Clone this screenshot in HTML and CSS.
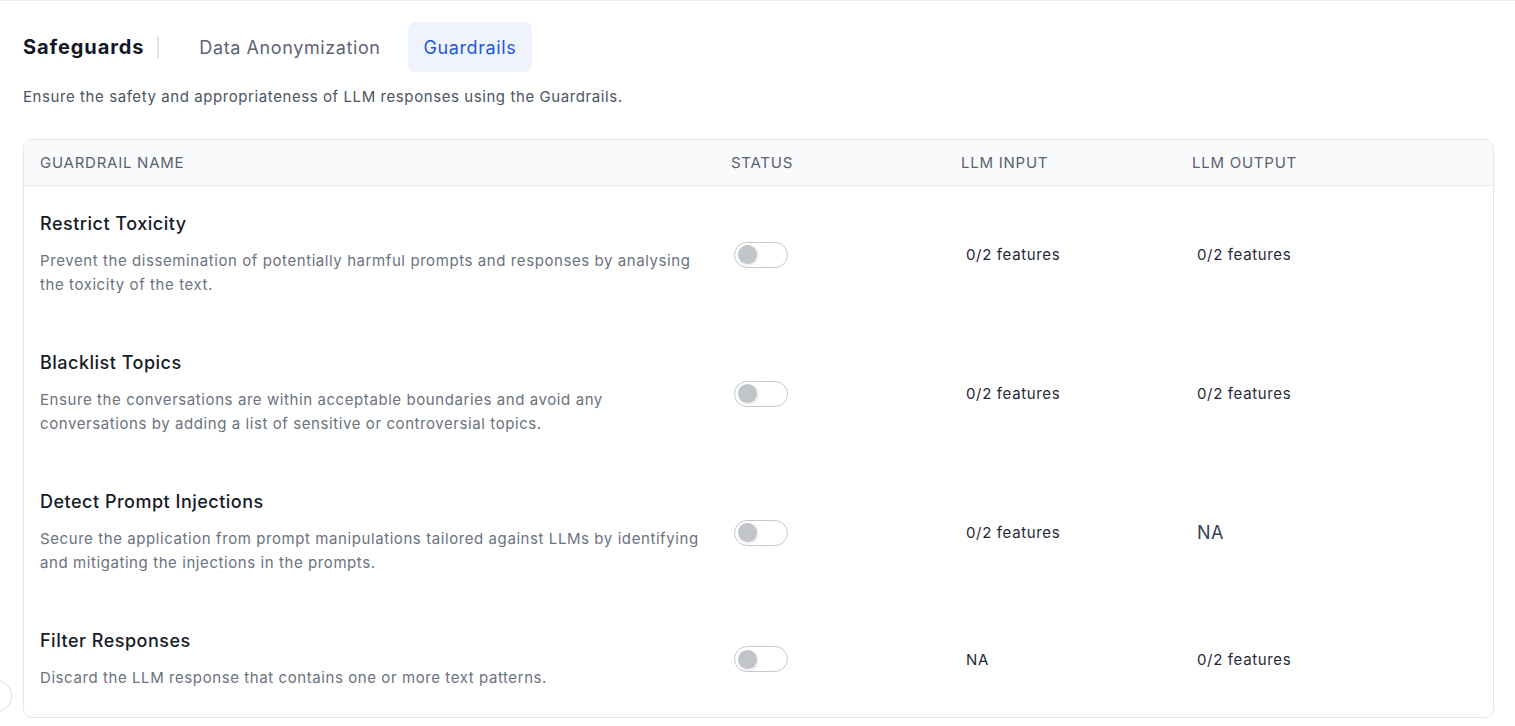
FILE: index.html
```html
<!DOCTYPE html>
<html>
<head>
<meta charset="utf-8">
<link rel="stylesheet" href="styles.css">
</head>
<body>
<div class="page">
  <div class="tabs">
    <span class="page-title">Safeguards</span>
    <span class="divider"></span>
    <span class="tab first-tab">Data Anonymization</span>
    <span class="tab active">Guardrails</span>
  </div>
  <p class="intro">Ensure the safety and appropriateness of LLM responses using the Guardrails.</p>

  <div class="table">
    <div class="row head">
      <div class="cell">GUARDRAIL NAME</div>
      <div class="cell">STATUS</div>
      <div class="cell">LLM INPUT</div>
      <div class="cell">LLM OUTPUT</div>
    </div>

    <div class="row body">
      <div class="cell name">
        <div class="title">Restrict Toxicity</div>
        <div class="desc">Prevent the dissemination of potentially harmful prompts and responses by analysing the toxicity of the text.</div>
      </div>
      <div class="cell mid"><span class="toggle"><span class="knob"></span></span></div>
      <div class="cell mid val">0/2 features</div>
      <div class="cell mid val">0/2 features</div>
    </div>

    <div class="row body">
      <div class="cell name">
        <div class="title">Blacklist Topics</div>
        <div class="desc">Ensure the conversations are within acceptable boundaries and avoid any conversations by adding a list of sensitive or controversial topics.</div>
      </div>
      <div class="cell mid"><span class="toggle"><span class="knob"></span></span></div>
      <div class="cell mid val">0/2 features</div>
      <div class="cell mid val">0/2 features</div>
    </div>

    <div class="row body">
      <div class="cell name">
        <div class="title">Detect Prompt Injections</div>
        <div class="desc">Secure the application from prompt manipulations tailored against LLMs by identifying and mitigating the injections in the prompts.</div>
      </div>
      <div class="cell mid"><span class="toggle"><span class="knob"></span></span></div>
      <div class="cell mid val">0/2 features</div>
      <div class="cell mid val big">NA</div>
    </div>

    <div class="row body last">
      <div class="cell name">
        <div class="title">Filter Responses</div>
        <div class="desc">Discard the LLM response that contains one or more text patterns.</div>
      </div>
      <div class="cell mid"><span class="toggle"><span class="knob"></span></span></div>
      <div class="cell mid val">NA</div>
      <div class="cell mid val">0/2 features</div>
    </div>
  </div>
</div>
<span class="side-handle"></span>
</body>
</html>
```

FILE: styles.css
```css
html, body {
  margin: 0;
  padding: 0;
  background: #ffffff;
  font-family: Inter, "Noto Sans", sans-serif;
  color: #111827;
}
body {
  border-top: 1px solid #ececef;
  height: 725px;
  overflow: hidden;
  position: relative;
}
.page {
  padding: 21px 21px 0 23px;
}
.tabs {
  display: flex;
  align-items: center;
  height: 50px;
}
.page-title {
  font-size: 20px;
  font-weight: 700;
  color: #111827;
  letter-spacing: 0.9px;
}
.divider {
  width: 2px;
  height: 23px;
  background: #e3e5e9;
  margin: 0 40px 0 13px;
}
.tab {
  font-size: 18px;
  color: #5d6478;
  height: 50px;
  display: flex;
  align-items: center;
  border-radius: 7px;
  padding: 0 16px;
  letter-spacing: 0.6px;
}
.tab.first-tab { padding: 0 27px 0 0; }
.tab.active {
  background: #eef3fd;
  color: #1d57d8;
}
.intro {
  margin: 13px 0 0 0;
  font-size: 15px;
  line-height: 24px;
  color: #4b5563;
  letter-spacing: 0.58px;
}
.table {
  margin-top: 30px;
  border: 1px solid #e5e7eb;
  border-radius: 9px;
  overflow: hidden;
  width: 1469px;
}
.row {
  display: grid;
  grid-template-columns: 691px 230px 231px 1fr;
}
.row.head {
  background: #f9fafb;
  border-bottom: 1px solid #e8eaee;
  height: 45px;
  align-items: center;
  font-size: 15px;
  color: #5b6170;
  letter-spacing: 0.75px;
}
.cell {
  padding: 0 17px 0 16px;
}
.row.head .cell:first-child {
  padding-left: 16px;
}
.row.body .name {
  padding: 25px 9px 28px 16px;
}
.row.body.last .name {
  padding-bottom: 27px;
}
.title {
  font-size: 18px;
  font-weight: 500;
  line-height: 26px;
  color: #151b28;
  letter-spacing: 0.5px;
}
.desc {
  margin-top: 12px;
  font-size: 15px;
  line-height: 24px;
  color: #6b7280;
  letter-spacing: 0.58px;
}
.mid {
  display: flex;
  align-items: center;
  padding-bottom: 2px;
}
.val {
  padding-left: 21px;
  font-size: 15px;
  color: #1f2937;
  letter-spacing: 0.65px;
}
.val.big {
  font-size: 18px;
  color: #374151;
  letter-spacing: 0.5px;
}
.toggle {
  height: 24px;
  width: 44px;
  border: 1px solid #c6c8cd;
  border-radius: 13px;
  margin-left: 3px;
  display: flex;
  align-items: center;
  padding: 0 5px 0 3px;
  box-sizing: content-box;
}
.knob {
  width: 19px;
  height: 19px;
  border-radius: 50%;
  background: #c1c4ca;
  box-shadow: 1px 1px 3px rgba(0,0,0,0.12);
}
.side-handle {
  position: absolute;
  left: -20px;
  top: 679px;
  width: 30px;
  height: 30px;
  border: 1px solid #dcdfe4;
  border-radius: 50%;
  background: #fff;
}
```
